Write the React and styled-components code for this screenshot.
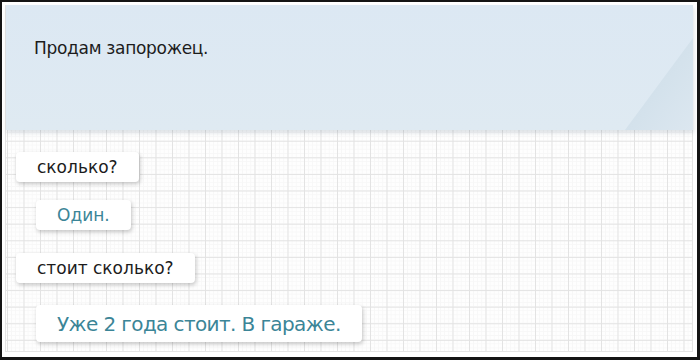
import styled, { createGlobalStyle } from 'styled-components'

const GlobalStyle = createGlobalStyle`
    html, body {
        margin: 0;
        padding: 0;
        background: #111;
    }
    #root {
        width: 700px;
        height: 360px;
    }
`

const Frame = styled.div`
    box-sizing: border-box;
    width: 700px;
    height: 360px;
    border-style: solid;
    border-color: #141414;
    border-width: 2px 3px 3px 2px;
    background: #fff;
    padding: 3px 4px 5px 3px;
    font-family: "DejaVu Sans", Tahoma, sans-serif;
`

const Sheet = styled.div`
    box-sizing: border-box;
    height: 100%;
    display: flex;
    flex-direction: column;
    gap: 22px;
    border: 1px solid #e4e4e4;
    border-top: none;
    background-color: #fefefe;
    background-image:
        linear-gradient(to right, #e3e3e3 1px, transparent 1px),
        linear-gradient(to bottom, #e3e3e3 1px, transparent 1px),
        linear-gradient(to right, #f7f7f7 1px, transparent 1px),
        linear-gradient(to bottom, #f7f7f7 1px, transparent 1px);
    background-size: 16.5px 16.6px, 16.5px 16.6px, 4.125px 4.15px, 4.125px 4.15px;
    background-position: 1px 3px;
`

const Header = styled.div`
    position: relative;
    box-sizing: border-box;
    height: 125px;
    flex-shrink: 0;
    margin-right: -1px;
    padding: 33px 28px;
    background: linear-gradient(to bottom, #dce8f3, #dfeaf2);
    box-shadow: 1px 3px 4px rgba(80, 100, 120, 0.18);
    color: #1c1c1c;
    font-size: 17px;
    letter-spacing: -0.3px;

    &::after {
        content: '';
        position: absolute;
        right: 0;
        bottom: 0;
        width: 68px;
        height: 92px;
        clip-path: polygon(100% 0, 100% 100%, 0 100%);
        background: linear-gradient(to bottom right, #cbdae6 0%, #d4e2ec 55%, #dce7f0 100%);
    }
`

const Chat = styled.div`
    display: flex;
    flex-direction: column;
    align-items: flex-start;
    padding-left: 10px;
`

const Bubble = styled.div`
    box-sizing: border-box;
    height: ${p => (p.$big ? '37px' : '30px')};
    margin-top: ${p => p.$gap}px;
    margin-left: ${p => (p.$reply ? '20px' : '0')};
    display: flex;
    align-items: center;
    padding: 0 21px;
    background: #fff;
    border-radius: 4px;
    box-shadow: 1px 2px 4px rgba(0, 0, 0, 0.22);
    color: ${p => (p.$reply ? '#3b8597' : '#1c1c1c')};
    font-size: ${p => (p.$big ? '20px' : '17px')};
    letter-spacing: ${p => (p.$big ? '-0.6px' : '0')};
    white-space: nowrap;
`

const messages = [
    { text: 'сколько?', gap: 0 },
    { text: 'Один.', gap: 18, reply: true },
    { text: 'стоит сколько?', gap: 23 },
    { text: 'Уже 2 года стоит. В гараже.', gap: 22, reply: true, big: true },
]

export default function App() {
    return (
        <>
            <GlobalStyle />
            <Frame>
                <Sheet>
                    <Header>Продам запорожец.</Header>
                    <Chat>
                        {messages.map(m => (
                            <Bubble key={m.text} $gap={m.gap} $reply={m.reply} $big={m.big}>
                                {m.text}
                            </Bubble>
                        ))}
                    </Chat>
                </Sheet>
            </Frame>
        </>
    )
}
